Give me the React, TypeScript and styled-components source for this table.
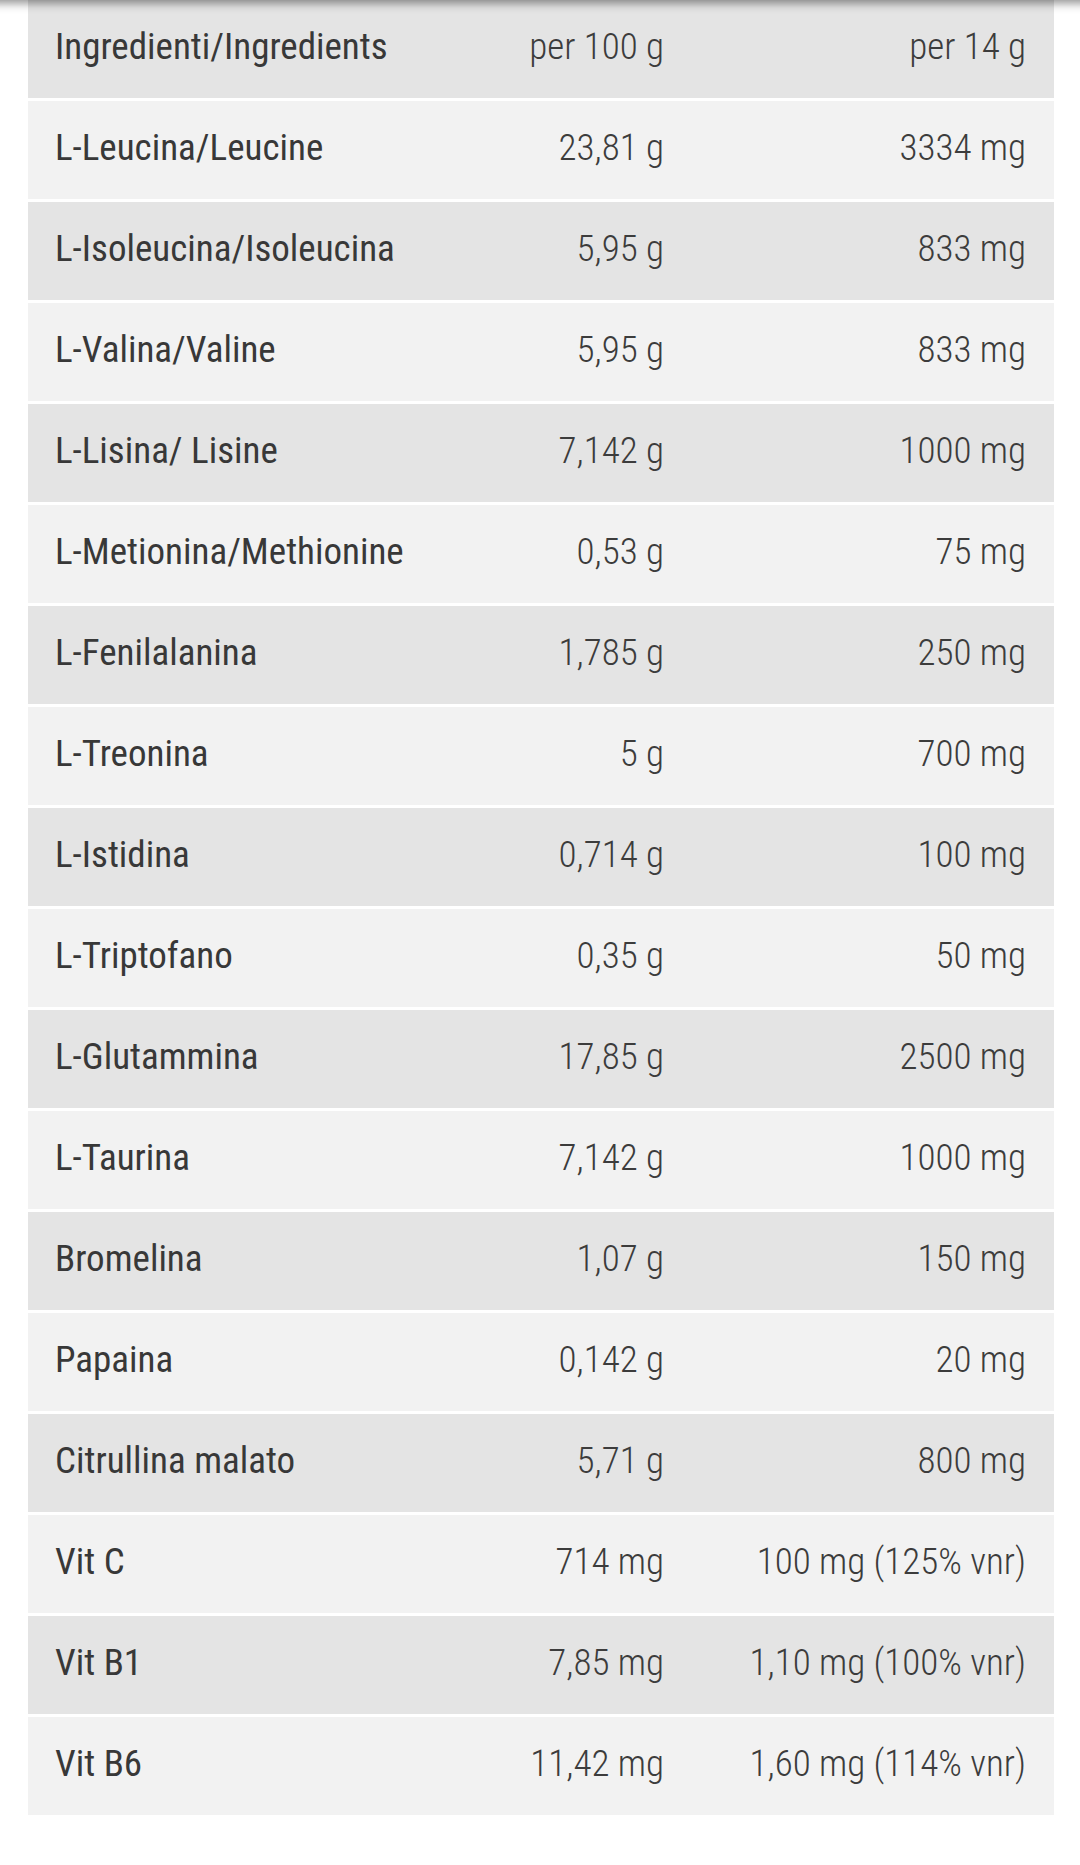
import React from 'react';
import styled, { createGlobalStyle } from 'styled-components';

const GlobalStyle = createGlobalStyle`
  html, body {
    margin: 0;
    padding: 0;
    background: #ffffff;
  }
  body {
    font-family: 'Roboto Condensed', Roboto, 'Liberation Sans', sans-serif;
    -webkit-font-smoothing: antialiased;
  }
`;

const Page = styled.div`
  position: relative;
  width: 1080px;
  min-height: 1865px;
  padding: 0 26px 0 28px;
  box-sizing: border-box;
  overflow: hidden;
`;

const TopShadow = styled.div`
  position: absolute;
  left: -20px;
  right: -20px;
  top: -30px;
  height: 30px;
  box-shadow: 0 3px 9px rgba(0, 0, 0, 0.45);
  z-index: 2;
`;

const Table = styled.div`
  display: flex;
  flex-direction: column;
  gap: 3px;
`;

const Row = styled.div<{ $shade: boolean }>`
  display: grid;
  grid-template-columns: 344px 318px 1fr;
  align-items: center;
  height: 98px;
  padding-bottom: 5px;
  box-sizing: border-box;
  background: ${p => (p.$shade ? '#e4e4e4' : '#f2f2f2')};
`;

const Cell = styled.div<{ $align: 'left' | 'right'; $last?: boolean }>`
  text-align: ${p => p.$align};
  padding: ${p =>
    p.$align === 'left' ? '0 0 0 27px' : p.$last ? '0 28px 0 0' : '0 26px 0 0'};
  white-space: nowrap;
  font-size: 37px;
  line-height: 44px;
`;

const Label = styled.span`
  color: #383838;
  font-weight: 400;
`;

const Value = styled.span`
  color: #3c3c3c;
  font-weight: 300;
`;

const rows: [string, string, string][] = [
  ['Ingredienti/Ingredients', 'per 100 g', 'per 14 g'],
  ['L-Leucina/Leucine', '23,81 g', '3334 mg'],
  ['L-Isoleucina/Isoleucina', '5,95 g', '833 mg'],
  ['L-Valina/Valine', '5,95 g', '833 mg'],
  ['L-Lisina/ Lisine', '7,142 g', '1000 mg'],
  ['L-Metionina/Methionine', '0,53 g', '75 mg'],
  ['L-Fenilalanina', '1,785 g', '250 mg'],
  ['L-Treonina', '5 g', '700 mg'],
  ['L-Istidina', '0,714 g', '100 mg'],
  ['L-Triptofano', '0,35 g', '50 mg'],
  ['L-Glutammina', '17,85 g', '2500 mg'],
  ['L-Taurina', '7,142 g', '1000 mg'],
  ['Bromelina', '1,07 g', '150 mg'],
  ['Papaina', '0,142 g', '20 mg'],
  ['Citrullina malato', '5,71 g', '800 mg'],
  ['Vit C', '714 mg', '100 mg (125% vnr)'],
  ['Vit B1', '7,85 mg', '1,10 mg (100% vnr)'],
  ['Vit B6', '11,42 mg', '1,60 mg (114% vnr)'],
];

const App: React.FC = () => {
  return (
    <>
      <GlobalStyle />
      <Page>
        <TopShadow />
        <Table>
          {rows.map(([name, per100, perServing], i) => (
            <Row key={name} $shade={i % 2 === 0}>
              <Cell $align="left">
                <Label>{name}</Label>
              </Cell>
              <Cell $align="right">
                <Value>{per100}</Value>
              </Cell>
              <Cell $align="right" $last>
                <Value>{perServing}</Value>
              </Cell>
            </Row>
          ))}
        </Table>
      </Page>
    </>
  );
};

export default App;
